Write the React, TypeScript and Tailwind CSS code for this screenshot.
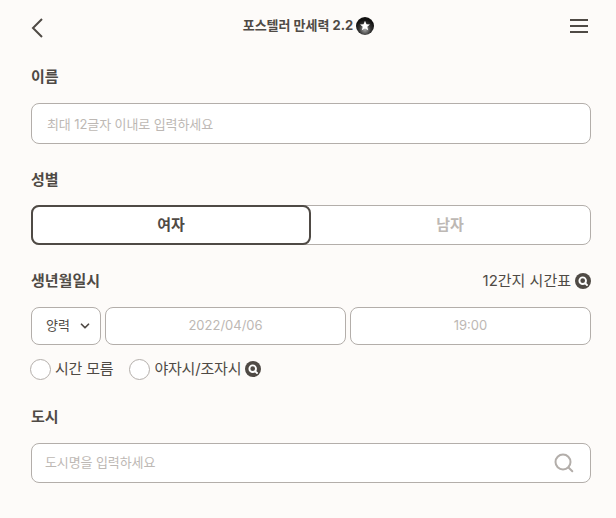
import React from 'react';
import { ChevronDown } from 'lucide-react';

const FONT = 'font-["Inter","Noto_Sans_CJK_KR",sans-serif]';

function SearchBadge() {
  return (
    <span className="flex h-4 w-4 shrink-0 items-center justify-center rounded-full bg-[#4f4a45]">
      <svg width="12" height="12" viewBox="0 0 12 12" fill="none" stroke="#fff" strokeWidth="1.9" strokeLinecap="round">
        <circle cx="5.7" cy="5.7" r="3.3" />
        <path d="M8.3 8.3 10 10" />
      </svg>
    </span>
  );
}

function StarBadge() {
  return (
    <svg width="18" height="18" viewBox="0 0 18 18" className="shrink-0">
      <defs>
        <radialGradient id="ball" cx="50%" cy="70%" r="55%">
          <stop offset="0%" stopColor="#a8a8a8" />
          <stop offset="60%" stopColor="#333" />
          <stop offset="100%" stopColor="#111" />
        </radialGradient>
      </defs>
      <circle cx="9" cy="9" r="9" fill="url(#ball)" />
      <path d="M9 3.8 10.5 7.2 14 7.5 11.3 9.8 12.2 13.3 9 11.4 5.8 13.3 6.7 9.8 4 7.5 7.5 7.2Z" fill="#fff" />
    </svg>
  );
}

function Radio({ label }: { label: string }) {
  return (
    <label className="flex items-center gap-1">
      <span className="h-[21px] w-[21px] rounded-full border border-[#b3aeaa] bg-white" />
      <span className="-mt-[2px] text-[15px] leading-[20px] tracking-[-0.2px] text-[#4f4a45]">{label}</span>
    </label>
  );
}

export default function App() {
  return (
    <div className={`${FONT} min-h-[518px] bg-[#fdfbf9] pr-[25px] pl-[31px] text-[#4f4a45]`}>
      <header className="flex h-[53px] items-center justify-between pb-[1px]">
        <svg width="12" height="20" viewBox="0 0 12 20" fill="none" stroke="#4f4a45" strokeWidth="2" className="mt-[4px]">
          <path d="M11 1 2 10l9 9" />
        </svg>
        <div className="flex items-center gap-[3px] pl-[4px]">
          <span className="text-[13px] font-bold">포스텔러 만세력 2.2</span>
          <StarBadge />
        </div>
        <div className="mr-[3px] flex w-[18px] flex-col gap-[4px]">
          <span className="h-[2px] bg-[#4f4a45]" />
          <span className="h-[2px] bg-[#4f4a45]" />
          <span className="h-[2px] bg-[#4f4a45]" />
        </div>
      </header>

      <h2 className="mt-[14px] text-[15px] leading-[20px] font-bold">이름</h2>
      <div className="mt-[16px] flex h-[41px] items-center rounded-lg border border-[#b3aeaa] bg-white pt-[2px] pl-[15px] text-[13px] tracking-[-0.1px] text-[#bdb8b4]">
        최대 12글자 이내로 입력하세요
      </div>

      <h2 className="mt-[26px] text-[15px] leading-[20px] font-bold">성별</h2>
      <div className="mt-[15px] flex h-[40px] rounded-lg border border-[#b3aeaa] bg-white">
        <div className="-m-px flex w-[280px] items-center justify-center rounded-lg border-2 border-[#4f4a45] bg-white text-[15px] font-bold">
          여자
        </div>
        <div className="flex flex-1 items-center justify-center text-[15px] font-bold text-[#bdb8b4]">남자</div>
      </div>

      <div className="mt-[26px] flex items-center justify-between">
        <h2 className="text-[15px] leading-[20px] font-bold">생년월일시</h2>
        <div className="flex items-center gap-[4px] text-[15px] leading-[20px]">
          12간지 시간표
          <SearchBadge />
        </div>
      </div>
      <div className="mt-[16px] flex h-[38px] gap-[4px]">
        <div className="flex w-[70px] items-center gap-[8px] rounded-lg border border-[#b3aeaa] bg-white pl-[14px] text-[13px]">
          양력
          <ChevronDown size={14} strokeWidth={3} />
        </div>
        <div className="flex w-[241px] items-center justify-center rounded-lg border border-[#b3aeaa] bg-white text-[13px] text-[#bdb8b4]">
          2022/04/06
        </div>
        <div className="flex flex-1 items-center justify-center rounded-lg border border-[#b3aeaa] bg-white text-[13px] text-[#bdb8b4]">
          19:00
        </div>
      </div>
      <div className="mt-[14px] -ml-px flex items-center gap-[16px]">
        <Radio label="시간 모름" />
        <div className="flex items-center gap-[4px]">
          <Radio label="야자시/조자시" />
          <span className="-mt-[2px]">
            <SearchBadge />
          </span>
        </div>
      </div>

      <h2 className="mt-[27px] text-[15px] leading-[20px] font-bold">도시</h2>
      <div className="mt-[16px] flex h-[40px] items-center justify-between rounded-lg border border-[#b3aeaa] bg-white pr-[16px] pl-[13px] text-[13px] tracking-[-0.1px] text-[#bdb8b4]">
        도시명을 입력하세요
        <svg width="20" height="20" viewBox="0 0 20 20" fill="none" stroke="#b3aeaa" strokeWidth="2" strokeLinecap="round">
          <circle cx="9" cy="9" r="7.5" />
          <path d="m14.5 14.5 3.8 3.8" />
        </svg>
      </div>
    </div>
  );
}
